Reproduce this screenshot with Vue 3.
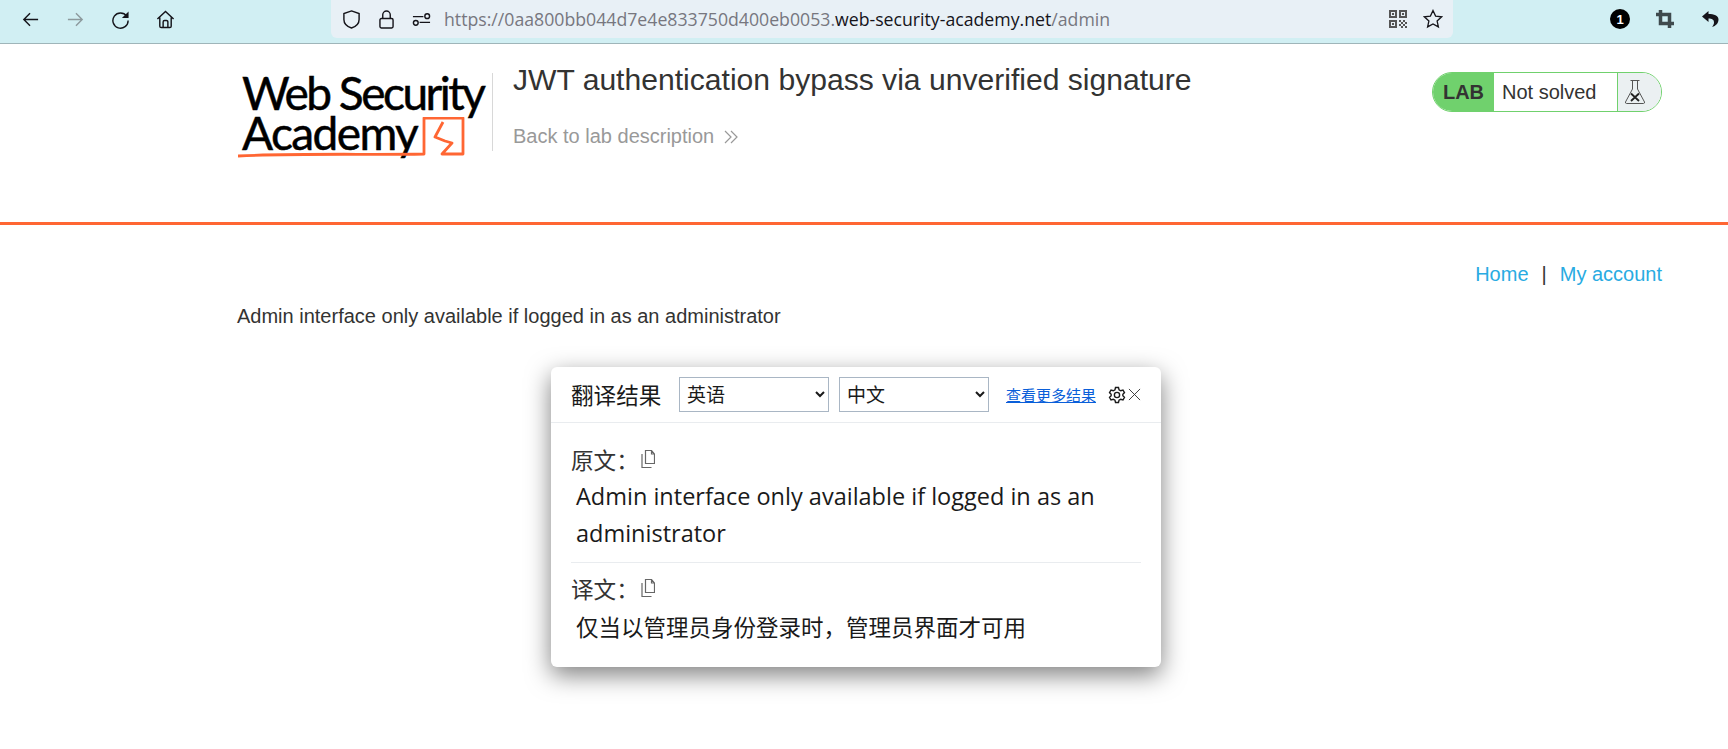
<template>
  <div class="page">
    <div class="toolbar">
      <div class="nav-icons">
        <svg class="ic" viewBox="0 0 20 20"><path d="M18 10H3M9.5 3.5L3 10l6.500 6.500" /></svg>
        <svg class="ic off" viewBox="0 0 20 20"><path d="M2 10h15M10.500 3.500L17 10l-6.500 6.500" /></svg>
        <svg class="ic" viewBox="0 0 20 20"><path d="M16.500 6.500A8 8 0 1 0 18 11" /><path class="solid" d="M18.500 1.500v7h-7z" /></svg>
        <svg class="ic" viewBox="0 0 20 20"><path d="M1.500 9.500L10 1.500l8.500 8M4 8v9a1.500 1.500 0 0 0 1.500 1.500h9A1.500 1.500 0 0 0 16 17V8M7.500 18.500v-6a1.500 1.500 0 0 1 1.500-1.500h2a1.500 1.500 0 0 1 1.500 1.500v6" /></svg>
      </div>
      <div class="urlbar">
        <svg class="ic shield" viewBox="0 0 20 20"><path d="M10 1l8 2.800v6.200c0 4.500-3.500 7.500-8 9-4.500-1.500-8-4.500-8-9V3.800z" /></svg>
        <svg class="ic lock" viewBox="0 0 16 20"><path d="M4 9V5a4 4 0 0 1 8 0v4M2.500 9h11a1.500 1.500 0 0 1 1.500 1.500v7a1.500 1.500 0 0 1-1.500 1.500h-11A1.500 1.500 0 0 1 1 17.500v-7A1.500 1.500 0 0 1 2.500 9z" /></svg>
        <svg class="ic sliders" viewBox="0 0 20 20"><path d="M1 7h11M8 13h11" /><circle cx="16" cy="6.500" r="2.500" /><circle cx="4" cy="13.500" r="2.500" /></svg>
        <span class="url">https://0aa800bb044d7e4e833750d400eb0053.<b>web-security-academy.net</b>/admin</span>
        <svg class="qr" viewBox="0 0 18 18">
          <path fill="#555" fill-rule="evenodd" d="M0 0h8v8H0zM2 2v4h4V2zM10 0h8v8h-8zM12 2v4h4V2zM0 10h8v8H0zM2 12v4h4v-4z" />
          <path fill="#555" d="M3 3h2v2H3zM13 3h2v2h-2zM3 13h2v2H3zM10 10h2v2h-2zM14 10h2v2h-2zM12 12h2v2h-2zM16 12h2v2h-2zM10 14h2v2h-2zM14 14h2v2h-2zM12 16h2v2h-2zM16 16h2v2h-2z" />
        </svg>
        <svg class="ic star" viewBox="0 0 20 20"><path d="M10 1.500l2.600 5.600 6 .7-4.500 4.100 1.300 6L10 15l-5.400 2.900 1.300-6L1.400 7.800l6-.7z" /></svg>
      </div>
      <div class="ext-icons">
        <span class="badge">1</span>
        <svg class="crop" viewBox="0 0 18 18"><path d="M4.500 0v13.500H18M0 4.500h13.500V18" /></svg>
        <svg class="reply" viewBox="0 0 18 18"><path d="M7.500 1L1 6.500 7.500 12V8.500c3.500 0 5.500 1 5.500 4 0 1.500-.8 3-2 4.500 4-1 6.500-4 6.500-7.500C17.500 5.500 13 4 7.500 4z" /></svg>
      </div>
    </div>

    <header class="lab-header">
      <div class="logo">
        <div class="logo-line first">Web Security</div>
        <div class="logo-line second">Academy</div>
        <svg class="logo-mark" viewBox="0 0 230 42">
          <path d="M0 39C60 36 130 38 186 37V1H225V37H204L214 26L207 24L197 20L205 5" />
        </svg>
      </div>
      <div class="lab-title">
        <h2>JWT authentication bypass via unverified signature</h2>
        <a class="back">Back to lab description
          <svg class="chev" viewBox="0 0 15 14"><path d="M1 1l6 6-6 6M7 1l6 6-6 6" /></svg>
        </a>
      </div>
      <div class="status">
        <span class="status-lab">LAB</span>
        <span class="status-text">Not solved</span>
        <span class="status-flask">
          <svg viewBox="0 0 22 26"><path d="M6.500 1.500h9M8.500 2v8L1.500 23a1.200 1.200 0 0 0 1 1.500h17a1.200 1.200 0 0 0 1-1.500L13.500 10V2" /><path class="x" d="M7 14.500l8 7.500M15 14.500l-8 7.500" /></svg>
        </span>
      </div>
    </header>

    <main class="content">
      <nav class="links"><a>Home</a><span class="pipe">|</span><a>My account</a></nav>
      <p class="notice">Admin interface only available if logged in as an administrator</p>
    </main>

    <section class="popup">
      <div class="popup-head">
        <span class="popup-title">翻译结果</span>
        <select class="lang"><option>英语</option></select>
        <select class="lang"><option>中文</option></select>
        <a class="more">查看更多结果</a>
        <svg class="gear" viewBox="0 0 24 24"><path d="M10 2h4l.7 3 2.300 1.300 3-.9 2 3.400-2.200 2.200v2l2.200 2.200-2 3.400-3-.9L14.700 19 14 22h-4l-.7-3L7 17.700l-3 .9-2-3.400L4.200 13v-2L2 8.800l2-3.400 3 .9L9.300 5z" /><circle cx="12" cy="12" r="3.500" /></svg>
        <svg class="close" viewBox="0 0 14 14"><path d="M1 1l12 12M13 1L1 13" /></svg>
      </div>
      <div class="popup-body">
        <div class="label">原文&#xFF1A;<svg class="copy" viewBox="0 0 14 18"><path d="M4.500 .5h6l3 3.500v9.500h-9zM10.500 .5V4h3M1 4v13.500h9.500" /></svg></div>
        <p class="tr-text">Admin interface only available if logged in as an administrator</p>
        <div class="divider"></div>
        <div class="label">译文&#xFF1A;<svg class="copy" viewBox="0 0 14 18"><path d="M4.500 .5h6l3 3.500v9.500h-9zM10.500 .5V4h3M1 4v13.500h9.500" /></svg></div>
        <p class="tr-text zh">仅当以管理员身份登录时&#xFF0C;管理员界面才可用</p>
      </div>
    </section>
  </div>
</template>

<script setup>
</script>

<style>
html, body {
  margin: 0;
  background: #fff;
  overflow: hidden;
}
</style>

<style scoped>
.page {
  position: relative;
  height: 749px;
  font-family: "Liberation Sans", Arial, sans-serif;
  color: #333332;
}

/* browser chrome */
.toolbar {
  display: flex;
  height: 43px;
  background: #d1eff3;
  border-bottom: 1px solid #9fb5b9;
}
.nav-icons {
  display: flex;
  align-items: center;
  gap: 26px;
  width: 331px;
  height: 38px;
  padding-left: 21px;
  box-sizing: border-box;
}
.ic {
  width: 19px;
  height: 19px;
  fill: none;
  stroke: #15141a;
  stroke-width: 1.500;
}
.ic.off {
  stroke: #8d9a9d;
}
.ic .solid {
  fill: #15141a;
  stroke: none;
}
.urlbar {
  display: flex;
  align-items: center;
  width: 1122px;
  height: 38px;
  background: #e8f0f6;
  border-radius: 0 0 6px 6px;
  padding-left: 11px;
  box-sizing: border-box;
  font-family: "Open Sans", sans-serif;
}
.lock {
  width: 15px;
  margin-left: 18px;
}
.sliders {
  margin-left: 18px;
}
.url {
  flex: 1;
  margin-left: 13px;
  font-size: 17.700px;
  color: #77777f;
  white-space: nowrap;
}
.url b {
  font-weight: 400;
  color: #15141a;
}
.qr {
  width: 18px;
  height: 18px;
}
.star {
  width: 20px;
  height: 20px;
  margin: 0 10px 0 16px;
  stroke-width: 1.300;
}
.ext-icons {
  display: flex;
  align-items: center;
  height: 38px;
  padding-left: 157px;
}
.badge {
  display: flex;
  align-items: center;
  justify-content: center;
  width: 20px;
  height: 20px;
  border-radius: 50%;
  background: #000;
  color: #fff;
  font-size: 13px;
  font-weight: 700;
}
.crop {
  width: 18px;
  height: 18px;
  margin-left: 26px;
  fill: none;
  stroke: #3f4a4d;
  stroke-width: 3.500;
}
.reply {
  width: 18px;
  height: 18px;
  margin-left: 27px;
  fill: #15141a;
}

/* lab header */
.lab-header {
  display: flex;
  align-items: flex-start;
  height: 181px;
  box-sizing: border-box;
  border-bottom: 3px solid #ff6633;
  padding: 29px 66px 0 238px;
}
.logo {
  position: relative;
  width: 255px;
  height: 78px;
  padding-left: 4px;
  box-sizing: border-box;
  font-family: Lato, sans-serif;
  font-size: 46px;
  line-height: 40px;
  color: #000;
  -webkit-text-stroke: 0.500px #000;
  white-space: nowrap;
  border-right: 1px solid #d8d8d8;
}
.logo-line.first {
  letter-spacing: -2.500px;
}
.logo-line.second {
  letter-spacing: -1.600px;
}
.logo-mark {
  position: absolute;
  left: 0;
  top: 44px;
  width: 230px;
  height: 42px;
  fill: none;
  stroke: #ff6633;
  stroke-width: 2.800;
  stroke-linejoin: round;
}
.lab-title {
  flex: 1;
  padding-left: 20px;
  margin-top: -11px;
}
h2 {
  margin: 0;
  font-size: 30.100px;
  font-weight: 400;
  line-height: 36px;
}
.back {
  display: flex;
  align-items: center;
  gap: 10px;
  margin-top: 27px;
  font-size: 20px;
  color: #999;
}
.chev {
  width: 15px;
  height: 14px;
  fill: none;
  stroke: #999;
  stroke-width: 1.200;
}
.status {
  display: flex;
  height: 40px;
  box-sizing: border-box;
  width: 230px;
  border: 1px solid #70d16d;
  border-radius: 20px;
  overflow: hidden;
  margin-top: -1px;
}
.status-lab {
  display: flex;
  align-items: center;
  justify-content: center;
  width: 61px;
  background: #70d16d;
  font-size: 20px;
  font-weight: 700;
}
.status-text {
  display: flex;
  align-items: center;
  width: 124px;
  padding-left: 8px;
  box-sizing: border-box;
  font-size: 20px;
  border-right: 1px solid #70d16d;
}
.status-flask {
  display: flex;
  align-items: center;
  justify-content: center;
  flex: 1;
  background: #ebf0f2;
  padding-right: 10px;
}
.status-flask svg {
  width: 22px;
  height: 26px;
  fill: none;
  stroke: #555;
  stroke-width: 1;
}
.status-flask .x {
  stroke: #222;
  stroke-width: 1.800;
}

/* page body */
.content {
  padding: 37px 66px 0 237px;
}
.links {
  display: flex;
  justify-content: flex-end;
  font-size: 20px;
  line-height: 24px;
  color: #29abe2;
}
.pipe {
  margin: 0 13px;
  color: #333332;
}
.notice {
  margin: 18px 0 0;
  font-size: 20px;
  line-height: 24px;
}

/* translation popup */
.popup {
  position: absolute;
  left: 551px;
  top: 367px;
  width: 610px;
  height: 300px;
  background: #fff;
  border-radius: 6px;
  box-shadow: 0 8px 24px rgba(0, 0, 0, 0.5);
  font-family: "Open Sans", "Noto Sans CJK SC", sans-serif;
  color: #1a1a1a;
}
.popup-head {
  display: flex;
  align-items: center;
  height: 56px;
  padding: 0 20px;
  box-sizing: border-box;
  border-bottom: 1px solid #e9ecef;
}
.popup-title {
  flex: none;
  width: 108px;
  font-size: 22.600px;
  white-space: nowrap;
}
.lang {
  flex: none;
  width: 150px;
  height: 35px;
  margin-right: 10px;
  padding-left: 3px;
  background: #fff;
  border: 1px solid #a9b6c4;
  border-radius: 0;
  font-family: inherit;
  font-size: 19px;
  color: #1a1a1a;
}
.more {
  flex: none;
  margin-left: 7px;
  font-size: 15px;
  color: #0a5fd9;
  text-decoration: underline;
  white-space: nowrap;
}
.gear {
  flex: none;
  width: 18px;
  height: 18px;
  margin-left: 12px;
  fill: none;
  stroke: #1a1a1a;
  stroke-width: 1.800;
}
.close {
  flex: none;
  width: 13px;
  height: 13px;
  margin-left: 2px;
  fill: none;
  stroke: #333;
  stroke-width: 1;
}
.popup-body {
  padding: 21px 20px 0;
}
.label {
  display: flex;
  align-items: center;
  height: 30px;
  font-size: 22.600px;
  color: #333;
}
.copy {
  width: 14px;
  height: 18px;
  margin-left: 2px;
  fill: none;
  stroke: #666;
  stroke-width: 1.200;
}
.tr-text {
  margin: 0;
  padding: 4px 5px 0;
  font-size: 23.500px;
  line-height: 37px;
}
.tr-text.zh {
  padding-top: 6px;
  font-size: 22.500px;
}
.divider {
  height: 1px;
  margin: 10px 0;
  background: #e9ecef;
}
</style>
